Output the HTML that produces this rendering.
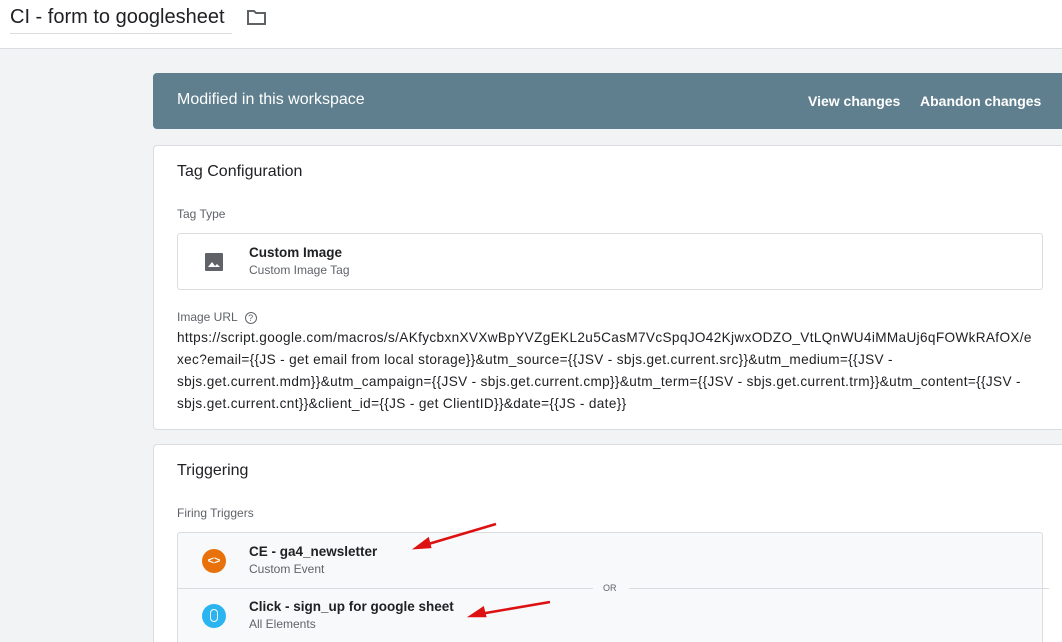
<!DOCTYPE html><html style="overflow:hidden;height:642px"><head><style>
body{margin:0;width:1062px;height:642px;overflow:hidden;background:#f1f3f4;font-family:"Liberation Sans",Arial,sans-serif;position:relative;color:#202124}
.top{position:absolute;left:0;top:0;width:1062px;height:48px;background:#fff;border-bottom:1px solid #dadce0}
.title{position:absolute;left:10px;top:6px;font-size:20px;color:#202124;border-bottom:1px solid #dadce0;padding-bottom:4px;width:222px}
.ban{position:absolute;left:153px;top:73px;width:915px;height:56px;background:#5f7f8e;border-radius:4px;color:#fff}
.card{position:absolute;left:153px;width:915px;background:#fff;border:1px solid #dadce0;border-radius:4px;overflow:hidden}
.h{position:absolute;left:23px;font-size:16px;color:#202124}
.lbl{position:absolute;left:23px;font-size:12px;color:#5f6368}
.box{position:absolute;left:23px;width:864px;border:1px solid #dadce0;border-radius:3px}
.n{font-size:13.5px;font-weight:bold;position:absolute;left:71px}
.s{font-size:12px;color:#5f6368;position:absolute;left:71px}
.url div{white-space:nowrap}
</style></head><body>
<div class="top"><div class="title">CI - form to googlesheet</div>
<svg style="position:absolute;left:246px;top:9px" width="21" height="17" viewBox="0 0 21 17"><path d="M2 2h6l2 2h9v11H2z" fill="none" stroke="#5f6368" stroke-width="2"/></svg></div>
<div class="ban"><span style="position:absolute;left:24px;top:18px;font-size:16px">Modified in this workspace</span>
<span style="position:absolute;left:655px;top:20px;font-size:14px;font-weight:bold">View changes</span>
<span style="position:absolute;left:767px;top:20px;font-size:14px;font-weight:bold">Abandon changes</span></div>
<div class="card" style="top:145px;height:283px">
<div class="h" style="top:17px">Tag Configuration</div>
<div class="lbl" style="top:61px">Tag Type</div>
<div class="box" style="top:87px;height:55px">
<svg style="position:absolute;left:27px;top:19px" width="18" height="18" viewBox="0 0 18 18"><rect x="0" y="0" width="18" height="18" rx="1" fill="#5f6368"/><path d="M3 14l4-5 3 4 2-2 3 3z" fill="#fff"/></svg>
<div class="n" style="top:11px">Custom Image</div><div class="s" style="top:29px">Custom Image Tag</div></div>
<div class="lbl" style="top:164px">Image URL <span style="display:inline-block;width:10px;height:10px;border:1.5px solid #5f6368;border-radius:50%;font-size:9px;text-align:center;line-height:10px;margin-left:4px">?</span></div>
<div class="url" style="position:absolute;left:23px;top:181px;font-size:13.6px;line-height:22px;color:#202124;letter-spacing:0.35px">
<div>https://script.google.com/macros/s/AKfycbxnXVXwBpYVZgEKL2u5CasM7VcSpqJO42KjwxODZO_VtLQnWU4iMMaUj6qFOWkRAfOX/e</div>
<div>xec?email={{JS - get email from local storage}}&amp;utm_source={{JSV - sbjs.get.current.src}}&amp;utm_medium={{JSV -</div>
<div>sbjs.get.current.mdm}}&amp;utm_campaign={{JSV - sbjs.get.current.cmp}}&amp;utm_term={{JSV - sbjs.get.current.trm}}&amp;utm_content={{JSV -</div>
<div>sbjs.get.current.cnt}}&amp;client_id={{JS - get ClientID}}&amp;date={{JS - date}}</div></div>
</div>
<div class="card" style="top:444px;height:220px">
<div class="h" style="top:17px">Triggering</div>
<div class="lbl" style="top:61px">Firing Triggers</div>
<div class="box" style="top:87px;height:140px;background:#f8f9fa">
<div style="position:absolute;left:24px;top:16px;width:24px;height:24px;border-radius:50%;background:#e8710a;color:#fff;font-size:11px;font-weight:bold;text-align:center;line-height:24px">&lt;&gt;</div>
<div class="n" style="top:11px">CE - ga4_newsletter</div><div class="s" style="top:29px">Custom Event</div>
<div style="position:absolute;left:0;top:55px;width:415px;border-top:1px solid #dadce0"></div>
<div style="position:absolute;left:451px;top:55px;width:420px;border-top:1px solid #dadce0"></div>
<div style="position:absolute;left:425px;top:50px;font-size:9px;color:#5f6368">OR</div>
<div style="position:absolute;left:24px;top:71px;width:24px;height:24px;border-radius:50%;background:#2bb5f0"><div style="position:absolute;left:8px;top:5px;width:8px;height:13px;border:1.5px solid #fff;border-radius:4px;box-sizing:border-box"></div></div>
<div class="n" style="top:66px">Click - sign_up for google sheet</div><div class="s" style="top:84px">All Elements</div></div>
</div>
<svg style="position:absolute;left:0;top:0" width="1062" height="642"><g stroke="#d11" stroke-width="2.5" fill="#d11"><line x1="496" y1="524" x2="425" y2="545"/><path d="M416 548l12-9 2 8z"/><line x1="550" y1="602" x2="480" y2="614"/><path d="M471 616l12-8 2 8z"/></g></svg>
</body></html>
